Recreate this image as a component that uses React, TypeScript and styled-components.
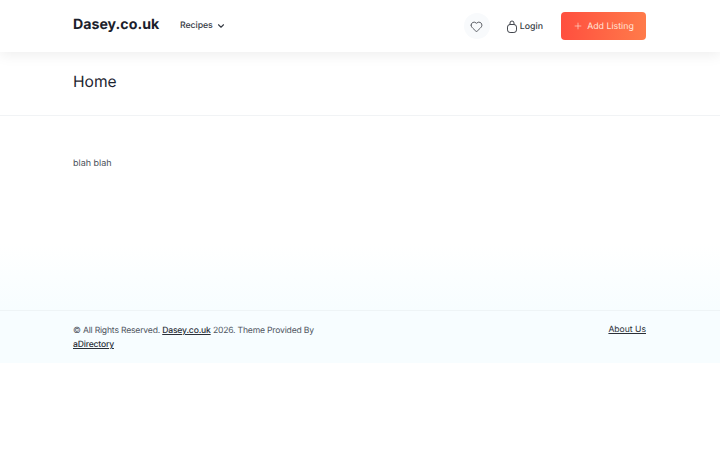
import React from "react";
import styled, { createGlobalStyle } from "styled-components";
import { ChevronDown, Heart, Plus } from "lucide-react";

const GlobalStyle = createGlobalStyle`
  html, body {
    margin: 0;
    background: #fff;
    font-family: Inter, "Open Sans", sans-serif;
    color: #222831;
    text-rendering: geometricPrecision;
  }
  * { box-sizing: border-box; }
`;

const Container = styled.div`
  width: 573px;
  margin-left: 73px;
`;

const Header = styled.header`
  position: relative;
  height: 52px;
  background: #fff;
  box-shadow: 0 2px 14px rgba(0, 0, 0, 0.08);
`;

const HeaderRow = styled(Container)`
  height: 52px;
  display: flex;
  align-items: center;
`;

const Logo = styled.a`
  width: 86px;
  font-size: 14.2px;
  font-weight: 700;
  white-space: nowrap;
  color: #1a202b;
  margin-top: -4px;
`;

const NavItem = styled.a`
  display: flex;
  align-items: center;
  gap: 3px;
  margin-left: 21px;
  margin-top: -1px;
  font-size: 8.8px;
  letter-spacing: -0.1px;
  font-weight: 500;
  color: #363b44;
`;

const Actions = styled.div`
  margin-left: auto;
  display: flex;
  align-items: center;
`;

const FavButton = styled.a`
  width: 26px;
  height: 26px;
  border-radius: 50%;
  background: #f8fafc;
  display: flex;
  align-items: center;
  justify-content: center;
  color: #2b3038;
  margin-right: 16px;
`;

const LoginLink = styled.a`
  display: flex;
  align-items: center;
  gap: 2px;
  font-size: 8.8px;
  font-weight: 500;
  color: #363b44;
  margin-right: 18px;
`;

const AddButton = styled.a`
  width: 85px;
  height: 28px;
  border-radius: 4px;
  background: linear-gradient(90deg, #ff4f3f, #ff7b4a);
  color: #ffe4d8;
  font-size: 8.8px;
  font-weight: 400;
  display: flex;
  align-items: center;
  justify-content: center;
  gap: 4px;
`;

const TitleBar = styled.section`
  height: 64px;
  border-bottom: 1px solid #f1f3f5;
  padding-top: 20px;
`;

const PageTitle = styled.h1`
  margin: 0;
  font-size: 15.6px;
  line-height: 20px;
  font-weight: 400;
  color: #1d2430;
`;

const Main = styled.main`
  height: 194px;
  padding-top: 41px;
  background: linear-gradient(180deg, #fff 66%, #f7fdff 100%);
  font-size: 9px;
  line-height: 14px;
  color: #4a505a;
`;

const Footer = styled.footer`
  height: 53px;
  background: #f7fdff;
  border-top: 1px solid #eef4f6;
`;

const FooterRow = styled(Container)`
  display: flex;
  justify-content: space-between;
  padding-top: 13px;
`;

const Copyright = styled.p`
  margin: 0;
  width: 250px;
  font-size: 8.6px;
  letter-spacing: -0.19px;
  line-height: 14px;
  color: #50565f;
`;

const FooterLink = styled.a`
  color: #2b3038;
  text-decoration: underline;
  font-weight: 500;
`;

const AboutLink = styled(FooterLink)`
  font-size: 8.6px;
  line-height: 12px;
  font-weight: 400;
`;

const LockIcon = () => (
  <svg width="12" height="13" viewBox="0 0 12 13" fill="none" stroke="#2b3038" strokeWidth="0.9">
    <rect x="1.5" y="4.5" width="9" height="8" rx="2.6" />
    <path d="M4 4.6V3a2 2 0 0 1 4 0v1.6" />
  </svg>
);

export default function App() {
  return (
    <>
      <GlobalStyle />
      <Header>
        <HeaderRow>
          <Logo>Dasey.co.uk</Logo>
          <NavItem>
            Recipes <ChevronDown size={10} strokeWidth={2.6} />
          </NavItem>
          <Actions>
            <FavButton>
              <Heart size={13} strokeWidth={1.4} />
            </FavButton>
            <LoginLink>
              <LockIcon /> Login
            </LoginLink>
            <AddButton>
              <Plus size={10} strokeWidth={1.5} /> Add Listing
            </AddButton>
          </Actions>
        </HeaderRow>
      </Header>
      <TitleBar>
        <Container>
          <PageTitle>Home</PageTitle>
        </Container>
      </TitleBar>
      <Main>
        <Container>blah blah</Container>
      </Main>
      <Footer>
        <FooterRow>
          <Copyright>
            © All Rights Reserved. <FooterLink>Dasey.co.uk</FooterLink> 2026. Theme Provided By{" "}
            <FooterLink>aDirectory</FooterLink>
          </Copyright>
          <AboutLink>About Us</AboutLink>
        </FooterRow>
      </Footer>
    </>
  );
}
